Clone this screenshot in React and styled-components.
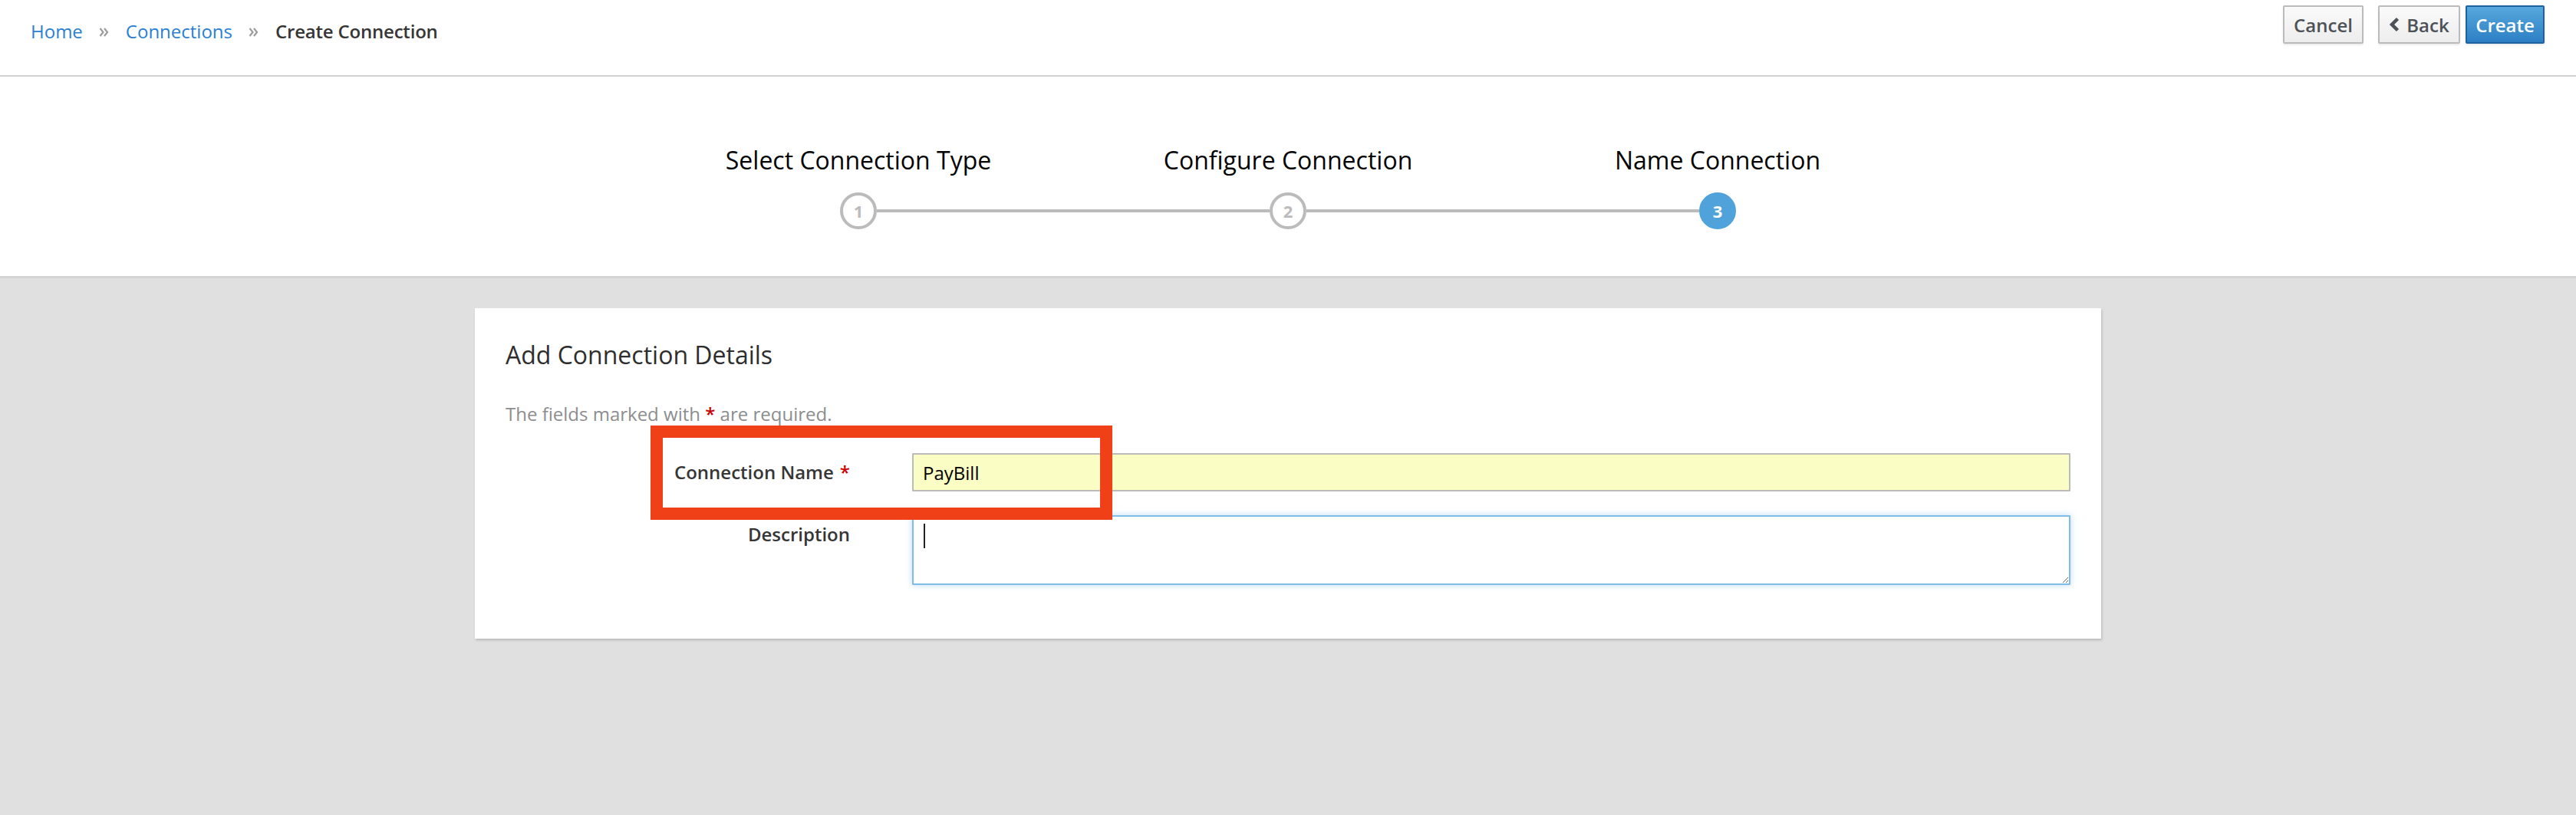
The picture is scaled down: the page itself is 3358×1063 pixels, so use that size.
import React from "react";
import styled, { createGlobalStyle } from "styled-components";

const GlobalStyle = createGlobalStyle`
  html, body {
    margin: 0;
    padding: 0;
    background: #e0e0e0;
    font-family: "Open Sans", "Liberation Sans", sans-serif;
  }
  #root {
    min-height: 100vh;
  }
`;

const Page = styled.div`
  min-height: 100vh;
  background: #e0e0e0;
`;

const Header = styled.div`
  display: flex;
  justify-content: space-between;
  align-items: flex-start;
  height: 98px;
  padding: 0 41px 0 40px;
  background: white;
  border-bottom: 2px solid #d1d1d1;
`;

const Breadcrumb = styled.div`
  display: flex;
  align-items: center;
  margin-top: 21px;
  font-size: 24px;
  line-height: 40px;
`;

const Crumb = styled.span`
  color: ${(p) => (p.$active ? "#363636" : "#2a7fd0")};
  font-weight: ${(p) => (p.$active ? 600 : 400)};
  letter-spacing: ${(p) => (p.$active ? "-0.2px" : "0")};
  cursor: ${(p) => (p.$active ? "default" : "pointer")};
`;

const Separator = styled.span`
  display: flex;
  align-items: center;
  margin: 2px 22px 0 21px;
`;

const Actions = styled.div`
  display: flex;
  margin-top: 7px;
`;

const Button = styled.button`
  display: flex;
  align-items: center;
  justify-content: center;
  box-sizing: border-box;
  height: 50px;
  width: ${(p) => p.$width}px;
  margin-left: ${(p) => p.$gap}px;
  padding: 0 12px;
  border-radius: 2px;
  font-family: "Open Sans", "Liberation Sans", sans-serif;
  font-size: 24px;
  font-weight: 600;
  cursor: pointer;
  background: linear-gradient(to bottom, #fafafa 0%, #ededed 100%);
  border: 2px solid #bbb;
  color: #4d5258;
  box-shadow: 0 2px 2px rgba(3, 3, 3, 0.08);

  ${(p) =>
    p.$primary &&
    `
    background: linear-gradient(to bottom, #57a8dd 0%, #2c7fc4 100%);
    border-color: #1e63a0;
    color: white;
  `}
`;

const BackIcon = styled.svg`
  margin-right: 9px;
`;

const Wizard = styled.div`
  height: 260px;
  background: white;
  border-bottom: 3px solid #d4d4d4;
  display: flex;
  justify-content: center;
`;

const Steps = styled.div`
  display: grid;
  grid-template-columns: repeat(3, 560px);
  padding-top: 90px;
`;

const Step = styled.div`
  display: flex;
  flex-direction: column;
  align-items: stretch;
`;

const StepTitle = styled.div`
  text-align: center;
  font-size: 32px;
  line-height: 38px;
  color: #030303;
`;

const Marker = styled.div`
  display: flex;
  align-items: center;
  margin-top: 23px;
`;

const Track = styled.div`
  flex: 1;
  height: 4px;
  background: ${(p) => (p.$hidden ? "transparent" : "#bbb")};
`;

const Circle = styled.div`
  box-sizing: border-box;
  width: 48px;
  height: 48px;
  border-radius: 50%;
  display: flex;
  align-items: center;
  justify-content: center;
  font-size: 22px;
  font-weight: 700;
  border: 4px solid ${(p) => (p.$active ? "#4fa3da" : "#bbb")};
  background: ${(p) => (p.$active ? "#4fa3da" : "white")};
  color: ${(p) => (p.$active ? "white" : "#bbb")};
`;

const Content = styled.div`
  padding: 39px 0 60px;
`;

const Card = styled.div`
  position: relative;
  box-sizing: border-box;
  width: 2120px;
  margin: 0 auto;
  padding: 42px 40px 70px;
  background: white;
  box-shadow: 1px 2px 3px rgba(3, 3, 3, 0.18);
`;

const CardTitle = styled.h2`
  margin: 0;
  font-size: 32px;
  font-weight: 400;
  line-height: 38px;
  color: #2e2e2e;
`;

const HelpText = styled.div`
  margin-top: 38px;
  font-size: 24px;
  line-height: 40px;
  color: #8b8d8f;
`;

const Required = styled.span`
  color: #cc0000;
  font-weight: 600;
  margin: ${(p) => p.$margin || "0"};
`;

const Form = styled.div`
  display: grid;
  grid-template-columns: 449px 1fr;
  column-gap: 81px;
  row-gap: 31px;
  margin-top: 31px;
`;

const Label = styled.label`
  text-align: right;
  font-size: 24px;
  font-weight: 600;
  line-height: 40px;
  padding-top: 5px;
  color: #363636;
`;

const TextInput = styled.input`
  box-sizing: border-box;
  width: 100%;
  height: 50px;
  padding: 0 12px;
  border: 2px solid #bbb;
  border-radius: 1px;
  background: #fafdc4;
  font-family: "Open Sans", "Liberation Sans", sans-serif;
  font-size: 24px;
  color: #000;
  outline: none;
`;

const AreaWrap = styled.div`
  position: relative;
`;

const TextArea = styled.textarea`
  display: block;
  box-sizing: border-box;
  width: 100%;
  height: 91px;
  padding: 6px 12px;
  border: 2px solid #80bde6;
  border-radius: 1px;
  background: white;
  font-family: "Open Sans", "Liberation Sans", sans-serif;
  font-size: 24px;
  outline: none;
  resize: vertical;
  box-shadow: 0 0 8px rgba(102, 175, 233, 0.45);
`;

const Caret = styled.span`
  position: absolute;
  left: 15px;
  top: 11px;
  width: 2px;
  height: 32px;
  background: #222;
`;

const Highlight = styled.div`
  position: absolute;
  left: 229px;
  top: 153px;
  width: 602px;
  height: 123px;
  box-sizing: border-box;
  border: 16px solid #f04018;
  pointer-events: none;
`;

const steps = ["Select Connection Type", "Configure Connection", "Name Connection"];

function DoubleAngle() {
  return (
    <svg width="13" height="12" viewBox="0 0 13 12">
      <polyline points="1.5,1 5.5,6 1.5,11" fill="none" stroke="#9c9c9c" strokeWidth="2.2" />
      <polyline points="7,1 11,6 7,11" fill="none" stroke="#9c9c9c" strokeWidth="2.2" />
    </svg>
  );
}

export default function App() {
  return (
    <Page>
      <GlobalStyle />
      <Header>
        <Breadcrumb>
          <Crumb>Home</Crumb>
          <Separator>
            <DoubleAngle />
          </Separator>
          <Crumb>Connections</Crumb>
          <Separator>
            <DoubleAngle />
          </Separator>
          <Crumb $active>Create Connection</Crumb>
        </Breadcrumb>
        <Actions>
          <Button $width={105} $gap={0}>Cancel</Button>
          <Button $width={107} $gap={19}>
            <BackIcon width="14" height="20" viewBox="0 0 14 20">
              <polyline points="11.5,2.5 4,10 11.5,17.5" fill="none" stroke="#4d5258" strokeWidth="4.5" />
            </BackIcon>
            Back
          </Button>
          <Button $width={103} $gap={7} $primary>Create</Button>
        </Actions>
      </Header>

      <Wizard>
        <Steps>
          {steps.map((title, i) => (
            <Step key={title}>
              <StepTitle>{title}</StepTitle>
              <Marker>
                <Track $hidden={i === 0} />
                <Circle $active={i === steps.length - 1}>{i + 1}</Circle>
                <Track $hidden={i === steps.length - 1} />
              </Marker>
            </Step>
          ))}
        </Steps>
      </Wizard>

      <Content>
        <Card>
          <CardTitle>Add Connection Details</CardTitle>
          <HelpText>
            The fields marked with <Required>*</Required> are required.
          </HelpText>
          <Form>
            <Label>
              Connection Name<Required $margin="0 0 0 8px">*</Required>
            </Label>
            <TextInput defaultValue="PayBill" />
            <Label>Description</Label>
            <AreaWrap>
              <TextArea />
              <Caret />
            </AreaWrap>
          </Form>
          <Highlight />
        </Card>
      </Content>
    </Page>
  );
}
